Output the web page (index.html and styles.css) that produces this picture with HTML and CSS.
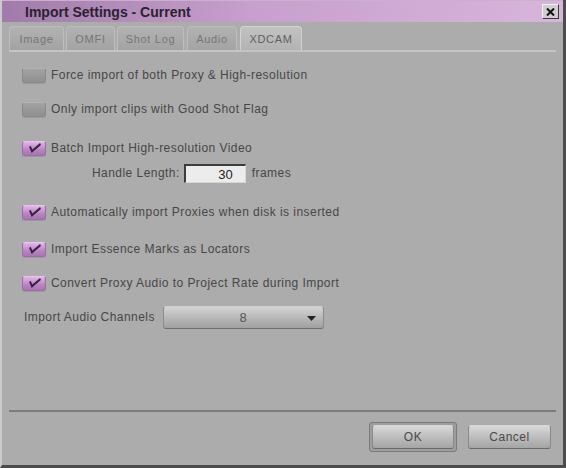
FILE: index.html
```html
<!DOCTYPE html>
<html lang="en">

<head>
    <meta charset="UTF-8">
    <title>Import Settings - Current</title>
    <link rel="stylesheet" href="styles.css">
</head>

<body>
    <div class="window">
        <div class="titlebar">
            <span class="title">Import Settings - Current</span>
            <span class="close">
                <svg width="9" height="8" viewBox="0 0 9 8">
                    <path d="M1 0.5 L8 7.5 M8 0.5 L1 7.5" stroke="#111" stroke-width="2" />
                </svg>
            </span>
        </div>

        <div class="tabs">
            <div class="tab w-image">Image</div>
            <div class="tab w-omfi">OMFI</div>
            <div class="tab w-shot">Shot Log</div>
            <div class="tab w-audio">Audio</div>
            <div class="tab active w-xdcam">XDCAM</div>
        </div>

        <div class="panel">
            <label class="row">
                <span class="check"></span>Force import of both Proxy &amp; High-resolution
            </label>
            <label class="row gap-14">
                <span class="check"></span>Only import clips with Good Shot Flag
            </label>
            <label class="row gap-19">
                <span class="check on"></span>Batch Import High-resolution Video
            </label>
            <div class="row handle gap-5">
                Handle Length:
                <span class="field">30</span>
                frames
            </div>
            <label class="row gap-19">
                <span class="check on"></span>Automatically import Proxies when disk is inserted
            </label>
            <label class="row gap-17">
                <span class="check on"></span>Import Essence Marks as Locators
            </label>
            <label class="row gap-14">
                <span class="check on"></span>Convert Proxy Audio to Project Rate during Import
            </label>
            <div class="row channels gap-12">
                Import Audio Channels
                <span class="select">
                    <span class="value">8</span>
                    <svg class="arrow" width="9" height="5" viewBox="0 0 9 5">
                        <path d="M0 0 H9 L4.5 5 Z" fill="#222" />
                    </svg>
                </span>
            </div>
        </div>

        <div class="buttons">
            <span class="default-frame"><button class="btn">OK</button></span>
            <button class="btn cancel">Cancel</button>
        </div>
    </div>
</body>

</html>
```

FILE: styles.css
```css
/* styles.css */
body {
    margin: 0;
    background-color: #aaaaaa;
    font-family: "Liberation Sans", Arial, sans-serif;
}

.window {
    width: 566px;
    height: 468px;
    box-sizing: border-box;
    background-color: #acacac;
    border-left: 2px solid #cbcbcb;
    border-right: 3px solid #4c4c4c;
    border-bottom: 3px solid #4c4c4c;
    display: flex;
    flex-direction: column;
}

.titlebar {
    height: 22px;
    flex: none;
    display: flex;
    align-items: center;
    justify-content: space-between;
    padding: 0 4px 0 23px;
    background: linear-gradient(to right, #a17ba9, #c7a0cd 45%, #d8b5db);
    border-top: 1px solid #c9b0cc;
    box-sizing: border-box;
}

.title {
    font-size: 14px;
    font-weight: bold;
    color: #2b2230;
}

.close {
    width: 17px;
    height: 15px;
    box-sizing: border-box;
    background-color: #cfcfcf;
    border: 1px solid;
    border-color: #f2f2f2 #3a3a3a #3a3a3a #f2f2f2;
    display: flex;
    align-items: center;
    justify-content: center;
}

.tabs {
    display: flex;
    gap: 2px;
    margin-top: 4px;
    padding-left: 7px;
    height: 24px;
    flex: none;
}

.tab {
    box-sizing: border-box;
    height: 24px;
    padding-top: 6px;
    text-align: center;
    font-size: 11px;
    letter-spacing: 0.7px;
    color: #767676;
    background: linear-gradient(#b2b2b2, #a3a3a3);
    border: 1px solid #bdbdbd;
    border-bottom: none;
    border-radius: 4px 4px 0 0;
}

.tab.active {
    background: linear-gradient(#c2c2c2, #b3b3b3);
    border-color: #d2d2d2;
    color: #606060;
}

.w-image { width: 55px; }
.w-omfi { width: 49px; }
.w-shot { width: 67px; }
.w-audio { width: 50px; margin-left: 1px; }
.w-xdcam { width: 62px; margin-left: 1px; }

.panel {
    margin: 0 7px;
    height: 362px;
    flex: none;
    box-sizing: border-box;
    border-top: 2px solid #c4c4c4;
    border-bottom: 2px solid #7c7c7c;
    padding: 13px 0 0 13px;
    display: flex;
    flex-direction: column;
    font-size: 12px;
    letter-spacing: 0.45px;
    color: #474747;
}

.row {
    height: 20px;
    display: flex;
    align-items: center;
}

.gap-5 { margin-top: 5px; }
.gap-12 { margin-top: 12px; }
.gap-14 { margin-top: 14px; }
.gap-17 { margin-top: 17px; }
.gap-19 { margin-top: 19px; }

.check {
    width: 24px;
    height: 15px;
    box-sizing: border-box;
    margin-right: 5px;
    border-radius: 3px;
    background: linear-gradient(#a3a3a3, #8f8f8f);
    border: 1px solid #8a8a8a;
    border-top-color: #b3b3b3;
    box-shadow: 0 1px 0 #9a9a9a;
    position: relative;
}

.check.on {
    background: linear-gradient(#e2b6e8, #b884c2 60%, #a874b2);
    border-color: #9c6ca6;
    border-top-color: #e6c6ea;
}

.check.on::after {
    content: "";
    position: absolute;
    left: 6px;
    top: 1px;
    width: 10px;
    height: 4px;
    border-left: 2px solid #3b1f44;
    border-bottom: 2px solid #3b1f44;
    transform: rotate(-40deg) skewX(-15deg);
}

.handle {
    padding-left: 70px;
}

.field {
    width: 62px;
    height: 19px;
    box-sizing: border-box;
    margin: 0 6px 0 4px;
    padding-right: 12px;
    text-align: right;
    line-height: 17px;
    font-size: 13px;
    letter-spacing: 0;
    color: #222;
    background-color: #ececec;
    border: 1px solid;
    border-color: #3c3c3c #d8d8d8 #d8d8d8 #3c3c3c;
    border-width: 2px 1px 1px 2px;
}

.channels {
    height: 24px;
    padding-left: 2px;
}

.select {
    margin-left: 8px;
    width: 161px;
    height: 23px;
    box-sizing: border-box;
    display: flex;
    align-items: center;
    border-radius: 3px;
    background: linear-gradient(#d3d3d3, #b9b9b9 50%, #a0a0a0);
    border: 1px solid #8c8c8c;
    border-top-color: #cfcfcf;
    border-bottom-color: #6e6e6e;
    position: relative;
}

.value {
    flex: 1;
    text-align: center;
    font-size: 13px;
    color: #555;
}

.arrow {
    position: absolute;
    right: 7px;
    top: 9px;
}

.buttons {
    flex: 1;
    display: flex;
    justify-content: flex-end;
    align-items: flex-start;
    gap: 11px;
    padding: 10px 12px 0 0;
}

.default-frame {
    padding: 2px;
    border: 1px solid #7a7a7a;
    border-radius: 3px;
    background-color: #9e9e9e;
}

.btn {
    width: 82px;
    height: 24px;
    font-family: "Liberation Sans", Arial, sans-serif;
    font-size: 12px;
    letter-spacing: 0.5px;
    color: #4a4a4a;
    border-radius: 3px;
    background: linear-gradient(#d8d8d8, #bdbdbd 50%, #a5a5a5);
    border: 1px solid #8a8a8a;
    border-top-color: #d6d6d6;
    border-bottom-color: #6a6a6a;
}

.cancel {
    margin-top: 3px;
    width: 83px;
}
```
